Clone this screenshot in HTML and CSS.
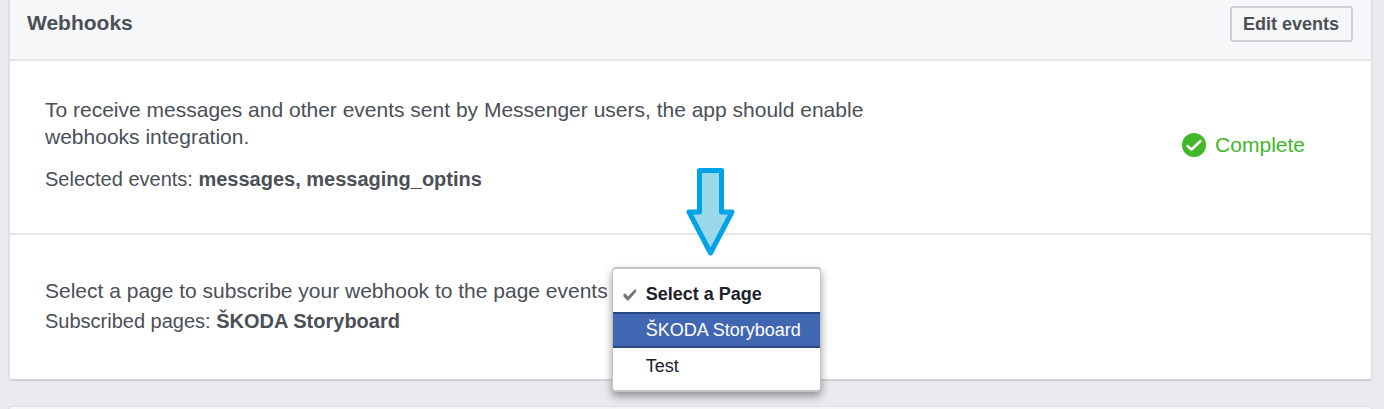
FILE: index.html
```html
<!DOCTYPE html>
<html lang="en">
<head>
<meta charset="utf-8">
<title>Webhooks</title>
<link rel="stylesheet" href="styles.css">
</head>
<body>
<main class="page">
  <section class="card">
    <header class="card-header">
      <h2 class="card-title">Webhooks</h2>
      <button type="button" class="edit-button">Edit events</button>
    </header>
    <div class="row row-events">
      <div class="copy">
        <p class="lead">To receive messages and other events sent by Messenger users, the app should enable webhooks integration.</p>
        <p class="detail">Selected events: <strong>messages, messaging_optins</strong></p>
      </div>
      <div class="status">
        <svg class="status-icon" viewBox="0 0 24 24" aria-hidden="true"><circle cx="12" cy="12" r="12" fill="#42b72a"/><path d="M5.500 13 L9.500 16.500 L18.500 8" fill="none" stroke="#fff" stroke-width="2.500" stroke-linecap="round" stroke-linejoin="round"/></svg>
        <span>Complete</span>
      </div>
    </div>
    <div class="row row-pages">
      <div class="subscribe">
        <p class="lead">Select a page to subscribe your webhook to the page events</p>
        <div class="picker">
          <svg class="arrow" viewBox="0 0 50 90" aria-hidden="true"><path d="M14.500 3.500 H36.500 V45 H47 L25.500 86 L4 45 H14.500 Z" fill="#99d9ea" stroke="#00a2e8" stroke-width="5" stroke-linejoin="round"/></svg>
          <div class="menu" role="menu">
            <button type="button" class="option option-current" role="menuitemradio" aria-checked="true">
              <svg class="tick" viewBox="0 0 14 14" aria-hidden="true"><path d="M0.500 6 L2.500 5.500 L5 8.500 L11.500 1.500 L13.300 1.500 L13 4 L5.500 12.500 L4 12.500 L0.500 8.500 Z" fill="#777"/></svg>
              <span>Select a Page</span>
            </button>
            <button type="button" class="option option-active" role="menuitemradio" aria-checked="false">ŠKODA Storyboard</button>
            <button type="button" class="option" role="menuitemradio" aria-checked="false">Test</button>
          </div>
        </div>
      </div>
      <p class="detail">Subscribed pages: <strong>ŠKODA Storyboard</strong></p>
    </div>
  </section>
  <section class="card card-next"></section>
</main>
</body>
</html>
```
FILE: styles.css
```css
* {
  box-sizing: border-box;
}

body {
  margin: 0;
  background: #e9eaee;
  color: #4b4f56;
  font-family: "Liberation Sans", Arial, sans-serif;
}

p,
h2 {
  margin: 0;
}

.page {
  display: flex;
  flex-direction: column;
  gap: 25px;
  min-height: 100vh;
  padding: 0 11px 0 8px;
}

.card {
  background: #fff;
  border: 2px solid #dfe0e4;
  border-top: 0;
  border-bottom-color: #d0d1d5;
  border-radius: 0 0 4px 4px;
}

.card-header {
  display: flex;
  align-items: flex-start;
  justify-content: space-between;
  padding: 6px 18px 17px 17px;
  background: #f6f7f9;
  border-bottom: 2px solid #e5e5e5;
}

.card-title {
  padding-top: 4px;
  font-size: 21px;
  line-height: 26px;
}

.edit-button {
  height: 36px;
  padding: 0 12px 0 11px;
  border: 2px solid #ced0d4;
  border-radius: 3px;
  background: #f6f7f9;
  color: #4b4f56;
  font: bold 18px/32px "Liberation Sans", Arial, sans-serif;
}

.row {
  padding: 0 35px;
}

.row-events {
  display: flex;
  align-items: center;
  justify-content: space-between;
  padding-top: 35px;
  padding-bottom: 42px;
  padding-right: 66px;
  border-bottom: 2px solid #e5e5e5;
}

.copy {
  display: flex;
  flex-direction: column;
  gap: 17px;
  max-width: 840px;
}

.lead {
  font-size: 21px;
  line-height: 27px;
}

.detail {
  font-size: 20px;
  line-height: 24px;
}

.status {
  display: flex;
  align-items: center;
  gap: 9px;
  padding-top: 3px;
  color: #42b72a;
  font-size: 21px;
  line-height: 24px;
}

.status-icon {
  width: 24px;
  height: 24px;
}

.row-pages {
  display: flex;
  flex-direction: column;
  gap: 5px;
  padding-top: 42px;
  padding-bottom: 46px;
}

.subscribe {
  display: flex;
  gap: 4px;
}

.picker {
  position: relative;
}

.arrow {
  position: absolute;
  left: 73px;
  bottom: 47px;
  width: 50px;
  height: 90px;
}

.menu {
  position: absolute;
  top: -10px;
  left: 0;
  width: 209px;
  padding: 7px 0 6px;
  background: #fff;
  background-clip: padding-box;
  border: 2px solid #c4c4c4;
  border-left-width: 1px;
  border-right-width: 1px;
  border-radius: 4px;
  box-shadow: 0 4px 8px rgba(0, 0, 0, 0.4);
}

.option {
  position: relative;
  display: block;
  width: 100%;
  height: 36px;
  padding: 0 0 0 33px;
  border: 0;
  border-top: 2px solid transparent;
  border-bottom: 2px solid transparent;
  background: transparent;
  color: #1d2129;
  font: 18px/32px "Liberation Sans", Arial, sans-serif;
  text-align: left;
}

.option-current {
  font-weight: bold;
}

.option-active {
  background: #4267b2;
  border-color: #29487d;
  color: #fff;
}

.tick {
  position: absolute;
  left: 10px;
  top: 10px;
  width: 14px;
  height: 14px;
}

.card-next {
  flex: 1;
  border-top: 1px solid #dfe0e4;
  border-bottom: 0;
  border-radius: 4px 4px 0 0;
  background: #f6f7f9;
}
```
